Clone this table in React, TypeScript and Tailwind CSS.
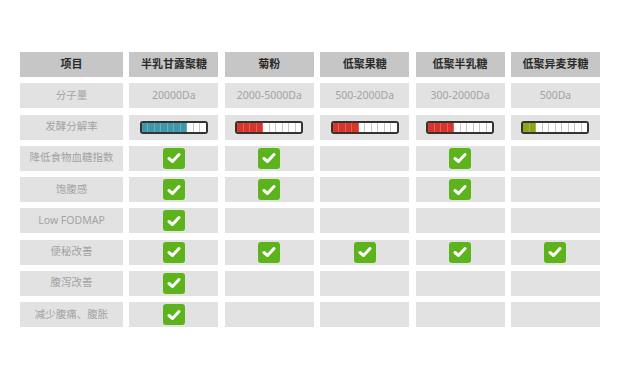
import React from "react";

const cols = ["项目", "半乳甘露聚糖", "菊粉", "低聚果糖", "低聚半乳糖", "低聚异麦芽糖"];
const mw = ["分子量", "20000Da", "2000-5000Da", "500-2000Da", "300-2000Da", "500Da"];
const bars: { n: number; c: string }[] = [
  { n: 7, c: "#3f98aa" },
  { n: 4, c: "#d9352b" },
  { n: 4, c: "#d9352b" },
  { n: 4, c: "#d9352b" },
  { n: 2, c: "#8ea41d" },
];
const checks: [string, boolean[]][] = [
  ["降低食物血糖指数", [true, true, false, true, false]],
  ["饱腹感", [true, true, false, true, false]],
  ["Low FODMAP", [true, false, false, false, false]],
  ["便秘改善", [true, true, true, true, true]],
  ["腹泻改善", [true, false, false, false, false]],
  ["减少腹痛、腹胀", [true, false, false, false, false]],
];

function Bar({ n, c }: { n: number; c: string }) {
  return (
    <div className="w-[68px] h-[13px] rounded-[3px] border-2 border-[#333333] bg-white flex overflow-hidden">
      {Array.from({ length: 10 }).map((_, i) => (
        <div
          key={i}
          className="flex-1 h-full border-r last:border-r-0"
          style={{
            backgroundColor: i < n ? c : "#ffffff",
            borderColor: i < n ? "rgba(255,255,255,0.22)" : "#c9c9c9",
          }}
        />
      ))}
    </div>
  );
}

function Check() {
  return (
    <div className="w-[22px] h-[21px] rounded-[3px] bg-[#5cb31c] flex items-center justify-center">
      <svg width="14" height="12" viewBox="0 0 14 12">
        <path d="M2 6.5 L5.5 9.5 L12 2.5" fill="none" stroke="#ffffff" strokeWidth="3" strokeLinecap="round" strokeLinejoin="round" />
      </svg>
    </div>
  );
}

export default function App() {
  const font = { fontFamily: '"Noto Sans", "Noto Sans CJK SC", sans-serif' };
  return (
    <div className="w-[620px] h-[381px] bg-white pt-[52px] pl-[20px]" style={font}>
      <div className="grid grid-cols-[103px_repeat(5,89px)] auto-rows-[25px] gap-x-[6.4px] gap-y-[6.25px]">
        {cols.map((c) => (
          <div key={c} className="bg-[#c6c6c6] flex items-center justify-center text-[11px] font-bold text-[#2a2a2a]">
            {c}
          </div>
        ))}
        {mw.map((c) => (
          <div key={c} className="bg-[#e2e2e2] flex items-center justify-center text-[10.5px] text-[#a3a3a3]">
            {c}
          </div>
        ))}
        <div className="bg-[#e2e2e2] flex items-center justify-center text-[10.5px] text-[#a3a3a3]">发酵分解率</div>
        {bars.map((b, i) => (
          <div key={i} className="bg-[#e2e2e2] flex items-center justify-center">
            <Bar n={b.n} c={b.c} />
          </div>
        ))}
        {checks.map(([label, vals]) => (
          <React.Fragment key={label}>
            <div className="bg-[#e2e2e2] flex items-center justify-center text-[10.5px] text-[#a3a3a3]">{label}</div>
            {vals.map((v, i) => (
              <div key={i} className="bg-[#e2e2e2] flex items-center justify-center">
                {v && <Check />}
              </div>
            ))}
          </React.Fragment>
        ))}
      </div>
    </div>
  );
}
